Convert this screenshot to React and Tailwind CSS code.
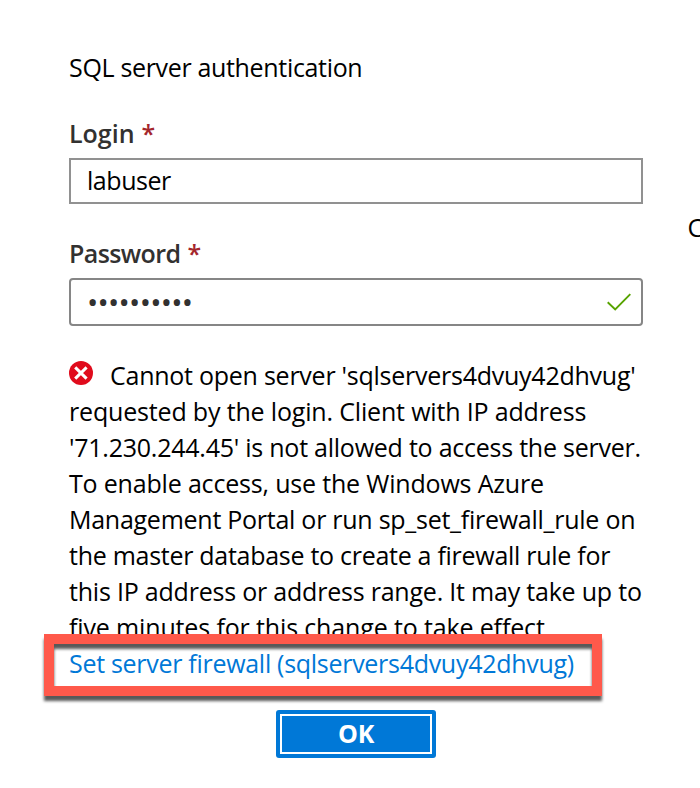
function Required() {
  return <span className="ml-[7px] font-semibold text-[#a4262c]">*</span>;
}

function Label({ children }) {
  return <label className="block h-9 font-semibold text-[#323130]">{children}<Required /></label>;
}

function ErrorIcon() {
  return (
    <svg className="mt-1 mr-[17px] size-6 shrink-0" viewBox="0 0 24 24" fill="none">
      <circle cx="12" cy="12" r="12" fill="#e00b1c" />
      <path d="M6.2 6.4 17.6 17.6M17.6 6.4 6.2 17.6" stroke="#fff" strokeWidth="3" />
    </svg>
  );
}

function CheckIcon() {
  return (
    <svg className="h-[18px] w-6" viewBox="0 0 24 18" fill="none">
      <path d="M.7 9.2 8.2 16.4 23.3 1.2" stroke="#57a300" strokeWidth="1.9" />
    </svg>
  );
}

export default function App() {
  return (
    <div className="relative flex h-[788px] w-[700px] overflow-hidden bg-white pl-[69px] font-['Open_Sans','Noto_Sans',sans-serif] text-[25px] leading-9 whitespace-nowrap text-black">
      <main className="w-[574px] shrink-0 pt-[49px]">
        <h1 className="h-[66px] tracking-[-0.33px]">SQL server authentication</h1>

        <Label>Login</Label>
        <div className="mt-[7px] flex h-[46px] items-center border-2 border-[#919191] pb-0.5 pl-4">
          <span className="tracking-[-0.45px]">labuser</span>
        </div>

        <div className="mt-[31px]">
          <Label><span className="tracking-[-0.6px]">Password</span></Label>
        </div>
        <div className="mt-[7px] flex h-12 items-center justify-between rounded border-2 border-[#868686] pr-[10px] pl-4">
          <span className="text-[30px] tracking-[-0.75px] text-[#323130]">••••••••••</span>
          <CheckIcon />
        </div>

        <section className="mt-[31px]">
          <div className="h-[277px] overflow-y-clip">
            <p className="flex tracking-[-0.25px]"><ErrorIcon />Cannot open server 'sqlservers4dvuy42dhvug'</p>
            <p className="tracking-[-0.17px]">requested by the login. Client with IP address</p>
            <p className="tracking-[-0.24px]">'71.230.244.45' is not allowed to access the server.</p>
            <p className="tracking-[-0.18px]">To enable access, use the Windows Azure</p>
            <p className="tracking-[-0.26px]">Management Portal or run sp_set_firewall_rule on</p>
            <p className="tracking-[-0.28px]">the master database to create a firewall rule for</p>
            <p className="tracking-[-0.21px]">this IP address or address range. It may take up to</p>
            <p className="tracking-[-0.14px]">five minutes for this change to take effect</p>
          </div>
          <a className="mt-[11px] block h-9 tracking-[-0.29px] text-[#0078d7]">Set server firewall (sqlservers4dvuy42dhvug)</a>
        </section>

        <button className="mt-[29px] ml-[207px] block h-12 w-40 rounded-[3px] bg-[#0078d7] p-1">
          <span className="flex h-10 items-center justify-center border-2 border-white pb-0.5 font-bold tracking-[-0.3px] text-white">OK</span>
        </button>
      </main>
      <aside className="ml-[44.5px] pt-[209px]">C</aside>
      <div className="pointer-events-none absolute top-[634px] left-11 h-[62px] w-[558px] border-[10px] border-[#ff594b] drop-shadow-[0_5px_1.5px_rgba(0,0,0,0.65)]" />
    </div>
  );
}
